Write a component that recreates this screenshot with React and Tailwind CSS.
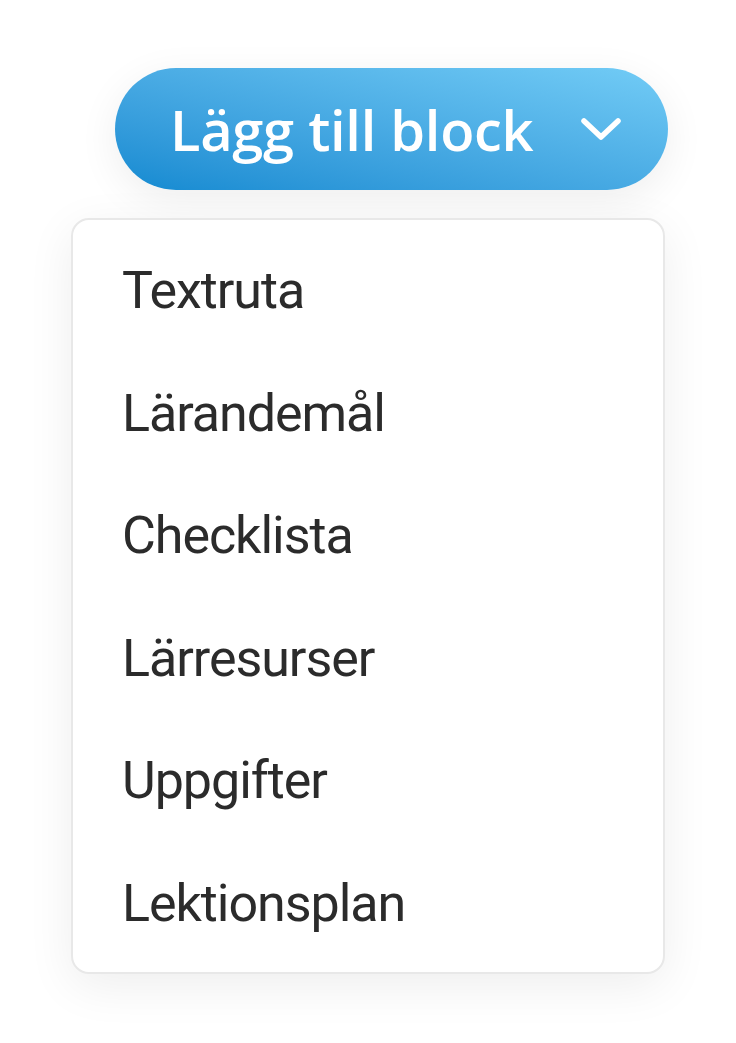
import { useState } from "react";

const items = ["Textruta", "Lärandemål", "Checklista", "Lärresurser", "Uppgifter", "Lektionsplan"];

export default function App() {
    const [open] = useState(true);

    return (
        <div className="min-h-[1043px] w-[736px] bg-white pt-[68px]">
            <button className="ml-[115px] flex h-[122px] w-[553px] items-center rounded-full bg-linear-to-tr from-[#128ad1] to-[#72ccf6] pl-[55px] text-white shadow-[0_10px_40px_rgba(0,0,0,0.07)]">
                <span
                    className="text-[56px] font-semibold leading-none tracking-[-0.005em]"
                    style={{ fontFamily: '"Open Sans", "Noto Sans", sans-serif' }}
                >
                    Lägg till block
                </span>
                <svg className="ml-auto mr-[46px]" width="42" height="28" viewBox="0 0 42 28" fill="none">
                    <path d="M4 6 L21 22 L38 6" stroke="white" strokeWidth="5.5" strokeLinecap="round" strokeLinejoin="round" />
                </svg>
            </button>

            {open && (
                <div className="ml-[71px] mt-[28px] w-[594px] rounded-[18px] border-2 border-[#e8e8e8] bg-white pt-[10px] pb-[7px] shadow-[0_12px_48px_rgba(0,0,0,0.07)]">
                    {items.map((item) => (
                        <div
                            key={item}
                            className="flex h-[122.5px] items-center pl-[49px] text-[52px] leading-none tracking-[-0.02em] text-[#2b2b2b]"
                            style={{ fontFamily: "Roboto, sans-serif" }}
                        >
                            {item}
                        </div>
                    ))}
                </div>
            )}
        </div>
    );
}
